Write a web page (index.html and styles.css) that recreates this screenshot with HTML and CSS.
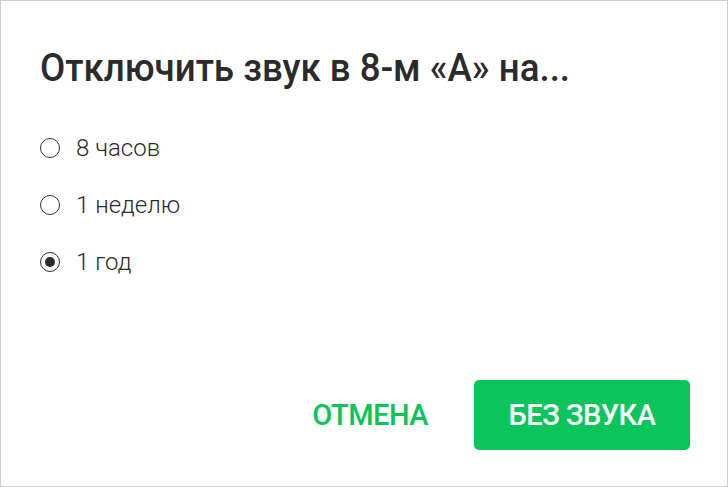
FILE: index.html
```html
<!DOCTYPE html>
<html lang="ru">
<head>
<meta charset="utf-8">
<link rel="stylesheet" href="styles.css">
</head>
<body>
<div class="dialog">
  <h1 class="title">Отключить звук в 8-м «А» на...</h1>
  <div class="options">
    <label class="option"><span class="radio"></span><span class="label">8 часов</span></label>
    <label class="option"><span class="radio"></span><span class="label">1 неделю</span></label>
    <label class="option"><span class="radio checked"></span><span class="label">1 год</span></label>
  </div>
  <div class="actions">
    <button class="btn btn-text">ОТМЕНА</button>
    <button class="btn btn-primary">БЕЗ ЗВУКА</button>
  </div>
</div>
</body>
</html>
```

FILE: styles.css
```css
html, body {
  margin: 0;
  padding: 0;
  background: #fff;
}
.dialog {
  box-sizing: border-box;
  width: 728px;
  height: 487px;
  border: 1px solid #cfcfcf;
  background: #fff;
  display: flex;
  flex-direction: column;
  font-family: Roboto, "Noto Sans", sans-serif;
  padding: 0 37px 0 39px;
}
.title {
  margin: 42px 0 0 0;
  font-size: 39px;
  line-height: 50px;
  font-weight: 500;
  color: #2b2b2b;
  transform: scaleX(0.94);
  transform-origin: left center;
  white-space: nowrap;
}
.options {
  display: flex;
  flex-direction: column;
  margin-top: 26px;
}
.option {
  display: flex;
  align-items: center;
  height: 57px;
  gap: 16px;
}
.radio {
  box-sizing: border-box;
  width: 20px;
  height: 20px;
  border: 1.5px solid #333;
  border-radius: 50%;
  display: flex;
  align-items: center;
  justify-content: center;
}
.radio.checked::after {
  content: "";
  width: 10px;
  height: 10px;
  border-radius: 50%;
  background: #2b2b2b;
}
.label {
  font-size: 24px;
  color: #2b2b2b;
  font-weight: 300;
}
.actions {
  margin-top: auto;
  margin-bottom: 36px;
  display: flex;
  justify-content: flex-end;
  align-items: center;
  gap: 46px;
}
.btn {
  font-family: Roboto, "Noto Sans", sans-serif;
  font-weight: 500;
  font-size: 29px;
  border: none;
  cursor: pointer;
  letter-spacing: -0.5px;
}
.btn-text {
  background: none;
  color: #0bc35b;
  padding: 0;
}
.btn-primary {
  background: #0bc55c;
  color: #fff;
  width: 216px;
  height: 70px;
  border-radius: 5px;
}
```
